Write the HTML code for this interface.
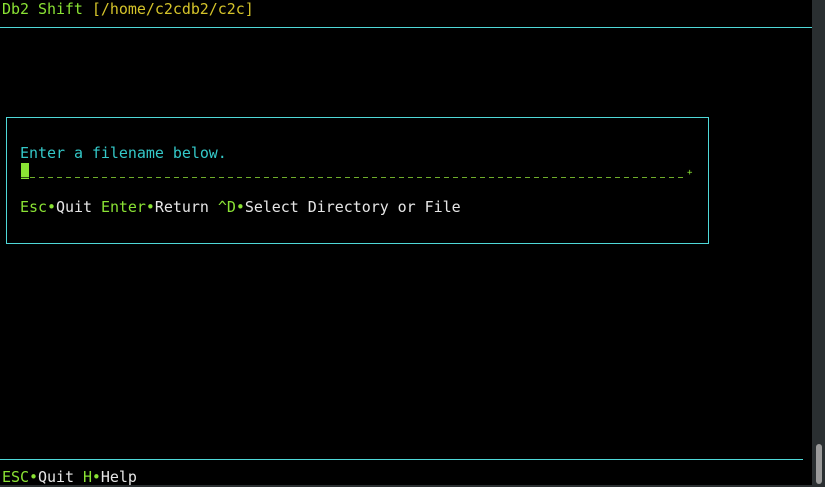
<!DOCTYPE html>
<html><head><style>
body{margin:0;width:825px;height:487px;background:#000;position:relative;overflow:hidden;font-family:"DejaVu Sans Mono","Liberation Mono",monospace;font-size:15px;letter-spacing:-0.04px;}
.t{position:absolute;white-space:pre;line-height:18px;height:18px;}
.g{color:#8ae234}.w{color:#e6e6e6}.c{color:#34c8c8}.y{color:#d4c32a}
</style></head><body>
<div class="t" style="left:2px;top:0"><span class="g">Db2 Shift </span><span class="y">[/home/c2cdb2/c2c]</span></div>
<div style="position:absolute;left:0;top:27px;width:812px;height:1px;background:#4fd8d8"></div>
<div style="position:absolute;left:6px;top:117px;width:701px;height:125px;border:1px solid #4fd8d8"></div>
<div class="t c" style="left:20px;top:144px">Enter a filename below.</div>
<div style="position:absolute;left:21px;top:163px;width:8px;height:16px;background:#8ae234"></div>
<div style="position:absolute;left:21px;top:177px;width:8px;height:1px;background:#2a4a10"></div>
<div style="position:absolute;left:30px;top:177px;width:654px;height:1px;background:repeating-linear-gradient(90deg,#6fae2a 0 5px,transparent 5px 9px)"></div>
<div class="t g" style="left:687px;top:164px;font-size:9px">+</div>
<div class="t" style="left:20px;top:198px"><span class="g">Esc</span><span class="g">•</span><span class="w">Quit </span><span class="g">Enter•</span><span class="w">Return </span><span class="g">^D•</span><span class="w">Select Directory or File</span></div>
<div style="position:absolute;left:0;top:459px;width:803px;height:1px;background:#4fd8d8"></div>
<div class="t" style="left:2px;top:468px"><span class="g">ESC•</span><span class="w">Quit </span><span class="g">H•</span><span class="w">Help</span></div>
<div style="position:absolute;left:812px;top:0;width:13px;height:487px;background:#2a2f31"></div>
<div style="position:absolute;left:816px;top:444px;width:6px;height:40px;border-radius:3px;background:#9a9a9a"></div>
<div style="position:absolute;left:0;top:485px;width:812px;height:2px;background:#2a2f31"></div>
</body></html>
